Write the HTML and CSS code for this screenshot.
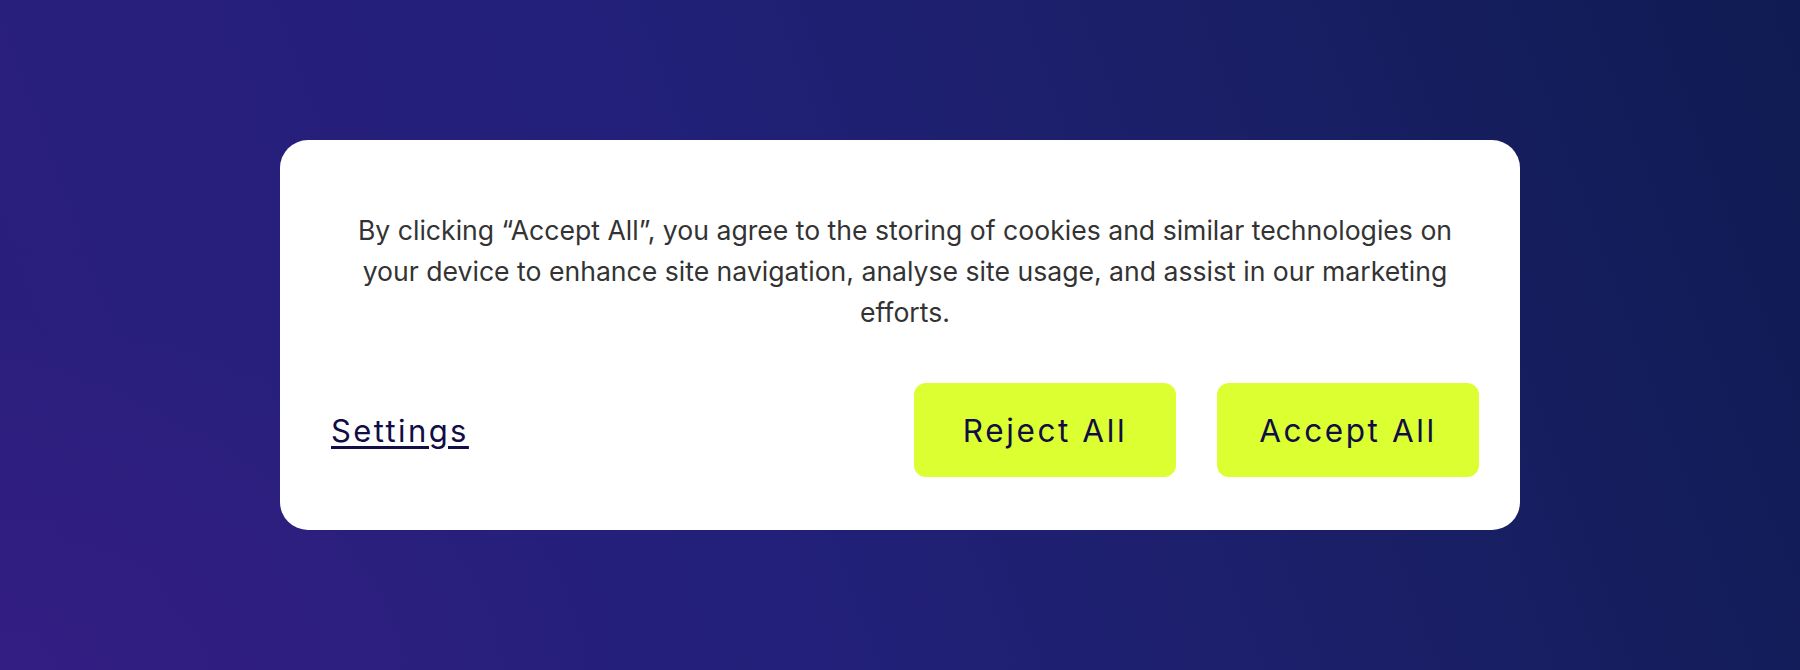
FILE: index.html
```html
<!DOCTYPE html>
<html lang="en">
<head>
<meta charset="utf-8">
<title>Cookie consent</title>
<link rel="stylesheet" href="styles.css">
</head>
<body>
<main class="stage">
  <section class="consent" role="dialog" aria-label="Cookie consent">
    <p class="consent-text">By clicking “Accept All”, you agree to the storing of cookies and similar technologies on your device to enhance site navigation, analyse site usage, and assist in our marketing efforts.</p>
    <div class="consent-actions">
      <a class="settings-link" href="#">Settings</a>
      <div class="btn-group">
        <button class="btn" type="button">Reject All</button>
        <button class="btn" type="button">Accept All</button>
      </div>
    </div>
  </section>
</main>
</body>
</html>
```

FILE: styles.css
```css
html, body {
  margin: 0;
  padding: 0;
  height: 100%;
}

body {
  font-family: Inter, "Open Sans", "Liberation Sans", sans-serif;
}

.stage {
  width: 1800px;
  height: 670px;
  display: flex;
  align-items: center;
  justify-content: center;
  background:
    radial-gradient(ellipse 900px 500px at 0% 100%, rgba(52, 30, 132, 0.9), rgba(52, 30, 132, 0) 70%),
    linear-gradient(70deg, #2c1e7c 0%, #22207a 40%, #1a1f66 70%, #0f1b52 100%);
}

.consent {
  width: 1240px;
  height: 390px;
  box-sizing: border-box;
  background: #ffffff;
  border-radius: 28px;
  padding: 70px 41px 53px 51px;
  display: flex;
  flex-direction: column;
}

.consent-text {
  margin: 0 auto;
  max-width: 1110px;
  text-align: center;
  font-size: 26.6px;
  line-height: 41px;
  color: #333333;
}

.consent-actions {
  margin-top: auto;
  display: flex;
  align-items: center;
  justify-content: space-between;
}

.settings-link {
  font-size: 31px;
  letter-spacing: 2.4px;
  color: #110d45;
  text-decoration: underline;
  text-decoration-thickness: 2.5px;
  text-underline-offset: 4px;
}

.btn-group {
  display: flex;
  gap: 41px;
}

.btn {
  width: 262px;
  height: 94px;
  border: none;
  border-radius: 12px;
  background: #dcff32;
  color: #110d45;
  font-family: inherit;
  font-size: 31.5px;
  letter-spacing: 2.6px;
  cursor: pointer;
}
```
